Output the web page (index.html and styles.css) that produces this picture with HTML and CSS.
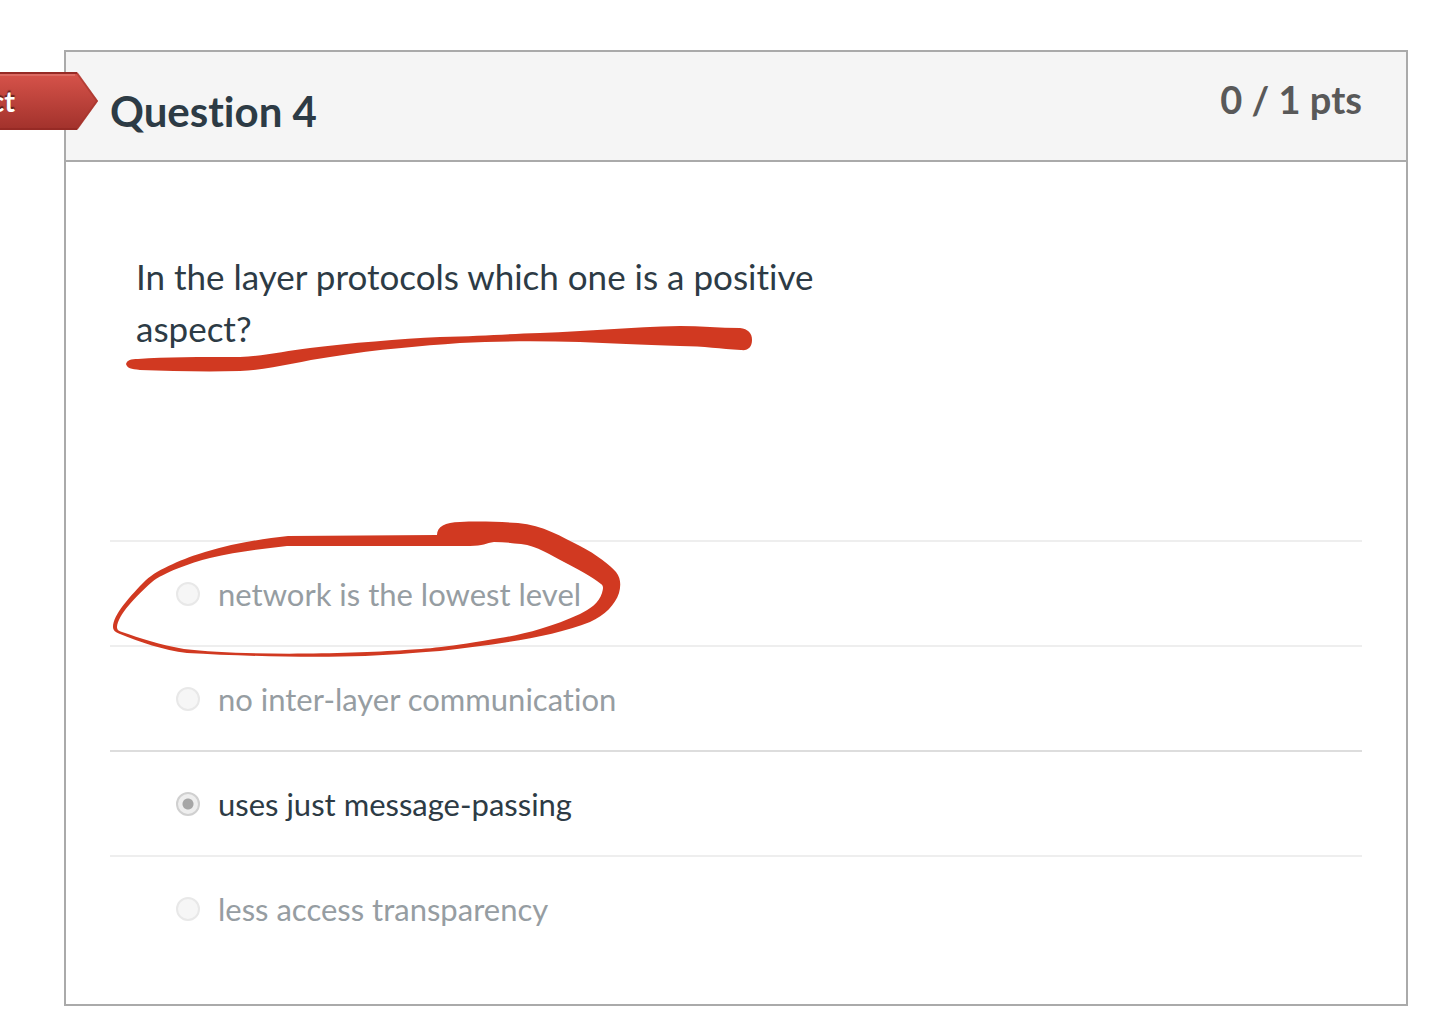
FILE: index.html
```html
<!DOCTYPE html>
<html lang="en">
<head>
<meta charset="utf-8">
<title>Question 4</title>
<link rel="stylesheet" href="styles.css">
</head>
<body>
<main class="question">
  <header class="question-header">
    <h1 class="question-name">Question 4</h1>
    <div class="points">0 / 1 pts</div>
    <div class="flag">
      <svg class="flag-shape" viewBox="0 0 178 58" aria-hidden="true">
        <defs>
          <linearGradient id="flag-fill" x1="0" y1="0" x2="0" y2="1">
            <stop offset="0" stop-color="#d8544b"/>
            <stop offset="1" stop-color="#a1312b"/>
          </linearGradient>
        </defs>
        <path d="M0 0H157L178 29L157 58H0Z" fill="url(#flag-fill)"/>
        <path d="M0 3H155" stroke="#dc6a62" stroke-width="2"/>
        <path d="M157 1L177 29L157 57" fill="none" stroke="#a5332c" stroke-width="2" stroke-opacity="0.6"/>
        <path d="M0 1H157M0 57H157" fill="none" stroke="#962a25" stroke-width="2"/>
      </svg>
      <span class="flag-label">Incorrect</span>
    </div>
  </header>
  <form class="question-body">
    <div class="question-text">
      <p class="prompt" id="prompt">In the layer protocols which one is a positive aspect?</p>
      <svg class="underline" viewBox="126 326 628 46" aria-hidden="true">
        <path d="M126 364C127 360 131 359 138 359C165 357 200 357 240 357C265 356 285 351 310 348C350 343 400 339 440 337C480 336 505 334 540 333C590 331 630 327 680 326C700 326 720 328 740 328C748 329 752 333 752 340C752 347 748 351 741 350C720 349 705 346 680 346C640 345 610 343 580 342C540 341 500 341 460 343C420 346 380 349 330 357C300 361 270 370 240 371C205 372 170 371 140 370C131 369 127 368 126 364Z"/>
      </svg>
    </div>
    <div class="answers" role="radiogroup" aria-labelledby="prompt">
      <label class="answer"><input type="radio" name="answer" disabled><span>network is the lowest level</span></label>
      <label class="answer"><input type="radio" name="answer" disabled><span>no inter-layer communication</span></label>
      <label class="answer selected"><input type="radio" name="answer" checked disabled><span>uses just message-passing</span></label>
      <label class="answer"><input type="radio" name="answer" disabled><span>less access transparency</span></label>
      <svg class="circle-mark" viewBox="110 520 512 138" aria-hidden="true">
        <path fill-rule="evenodd" d="M113 627C113 615 130 596 146 580C158 569 185 558 205 552C235 543 262 539 288 536L437 535C437 527 445 522 460 522C480 521 500 522 518 523C543 525 562 537 580 546C596 554 611 566 616 572C621 578 621 586 619 593C615 605 605 615 590 622C550 638 490 645 440 651C410 653 390 655 365 656C310 658 240 656 187 653C163 650 140 642 120 634C115 632 113 630 113 627ZM117 627C118 615 135 597 152 582C163 573 190 563 210 558C235 552 260 549 287 546C295 546 330 546 380 546H470C483 546 486 543 494 542C503 542 512 543 521 544C538 546 550 555 564 562C578 569 592 577 601 584C604 586 603 589 602 593C599 603 590 609 580 614C550 628 520 635 500 638C450 647 425 649 405 650C350 654 240 656 184 649C160 645 140 638 122 632C118 631 117 629 117 627Z"/>
      </svg>
    </div>
  </form>
</main>
</body>
</html>
```
FILE: styles.css
```css
* {
  box-sizing: border-box;
}

body {
  margin: 0;
  padding: 50px 40px 22px 64px;
  overflow-x: hidden;
  background: #fff;
  color: #2d3b45;
  font-family: Lato, sans-serif;
  font-variant-ligatures: none;
}

.question {
  border: 2px solid #aaa;
}

.question-header {
  position: relative;
  display: flex;
  justify-content: space-between;
  align-items: flex-start;
  padding: 23px 44px;
  border-bottom: 2px solid #aaa;
  background: #f5f5f5;
}

.question-name {
  margin: 0;
  padding-top: 10px;
  font-size: 42px;
  font-weight: 700;
  line-height: 52px;
}

.points {
  color: #595959;
  font-size: 38px;
  font-weight: 700;
  line-height: 48px;
}

.flag {
  position: absolute;
  top: 20px;
  left: -146px;
  width: 178px;
  height: 58px;
}

.flag-shape {
  display: block;
  width: 100%;
  height: 100%;
}

.flag-label {
  position: absolute;
  top: 0;
  right: 83px;
  color: #fff;
  font-size: 29px;
  font-weight: 700;
  line-height: 58px;
  text-shadow: 0 -2px 1px rgba(0, 0, 0, 0.5);
}

.question-body {
  padding: 88px 44px 40px;
}

.question-text {
  position: relative;
  min-height: 290px;
  padding: 0 26px;
}

.prompt {
  max-width: 720px;
  margin: 0;
  font-size: 35px;
  line-height: 52px;
}

.underline {
  position: absolute;
  top: 76px;
  left: 16px;
  width: 628px;
  height: 46px;
  fill: #d13921;
}

.answers {
  position: relative;
  padding-bottom: 4px;
}

.answer {
  display: flex;
  align-items: center;
  gap: 18px;
  min-height: 105px;
  padding-left: 66px;
  border-top: 2px solid #eee;
  color: #969da2;
  font-size: 31px;
  line-height: 40px;
}

.answer.selected {
  border-top-color: #ddd;
  color: #2d3b45;
}

.answer input {
  appearance: none;
  width: 24px;
  height: 24px;
  margin: 0;
  border: 2px solid #e8e8e8;
  border-radius: 50%;
  background: #f6f6f6;
}

.answer input:checked {
  border-color: #d0d0d0;
  background: radial-gradient(circle, #a6a6a6 5px, #eee 6px);
}

.circle-mark {
  position: absolute;
  top: -20px;
  left: 0;
  width: 512px;
  height: 138px;
  fill: #d13921;
}
```
